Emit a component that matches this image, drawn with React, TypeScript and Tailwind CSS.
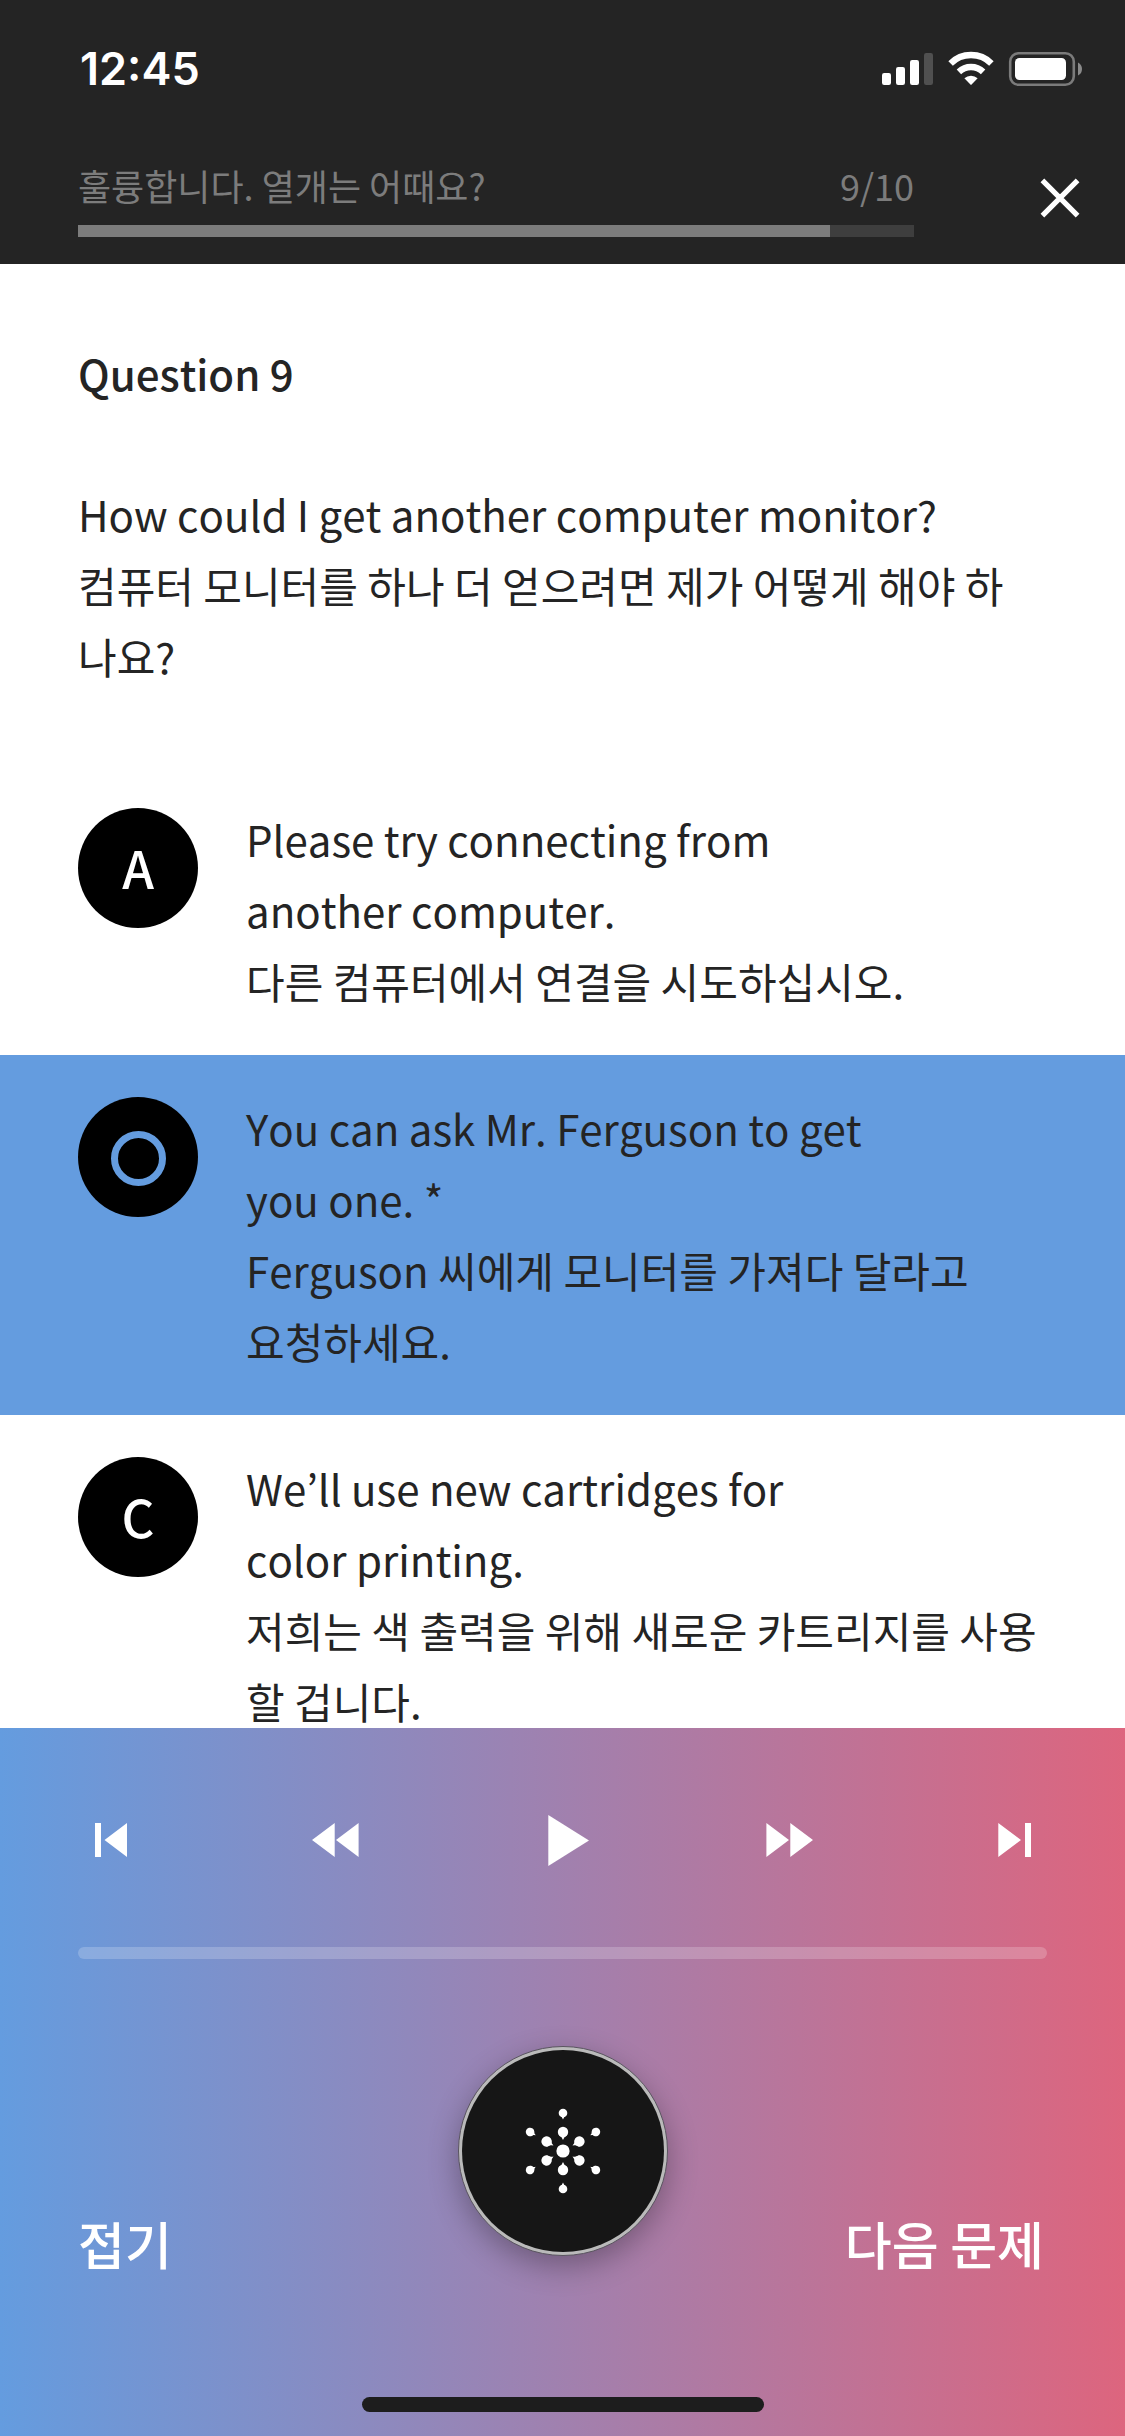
import { ReactNode } from "react"

const options = [
  {
    id: "A",
    correct: false,
    lines: ["Please try connecting from", "another computer.", "다른 컴퓨터에서 연결을 시도하십시오."],
  },
  {
    id: "B",
    correct: true,
    lines: ["You can ask Mr. Ferguson to get", "you one. *", "Ferguson 씨에게 모니터를 가져다 달라고", "요청하세요."],
  },
  {
    id: "C",
    correct: false,
    lines: ["We’ll use new cartridges for", "color printing.", "저희는 색 출력을 위해 새로운 카트리지를 사용", "할 겁니다."],
  },
]

function StatusIcons() {
  return (
    <svg width="201" height="36" viewBox="0 0 201 36">
      {/* Signal */}
      <rect x="0" y="22" width="9" height="12" rx="2.2" fill="#fff" />
      <rect x="14" y="16" width="9" height="18" rx="2.2" fill="#fff" />
      <rect x="28" y="9" width="9" height="25" rx="2.2" fill="#fff" />
      <rect x="42" y="2" width="9" height="32" rx="2.2" fill="#505050" />

      {/* Wifi */}
      <g fill="none" stroke="#fff" strokeWidth="6.4">
        <path d="M68.6 12.4 A29 29 0 0 1 109.4 12.4" />
        <path d="M76.9 20.9 A17.4 17.4 0 0 1 101.1 20.9" />
      </g>
      <path d="M82.4 27.3 A9.6 9.6 0 0 1 95.6 27.3 L89.6 33.5 Q89 34 88.4 33.5 Z" fill="#fff" />

      {/* Battery */}
      <rect x="128.2" y="2.2" width="63.6" height="31.6" rx="8.5" fill="none" stroke="#7b7b7b" strokeWidth="2.6" />
      <rect x="133" y="7" width="51" height="22" rx="4.5" fill="#fff" />
      <path d="M196 11.5 Q200 13.5 200 18 Q200 22.5 196 24.5 Z" fill="#8a8a8a" />
    </svg>
  )
}

function SparkIcon() {
  const angles = [0, 60, 120, 180, 240, 300]
  return (
    <svg width="90" height="90" viewBox="-45 -45 90 90" fill="#fff">
      <circle r="6.6" />
      {angles.map((a) => (
        <g key={a} transform={`rotate(${a})`}>
          <circle cy="-19" r="5.2" />
          <path d="M-4.6 -16.6 Q-1 -14.5 0 -11 Q1 -14.5 4.6 -16.6 Z" />
          <circle cy="-38" r="4.3" />
          <path d="M-3.6 -35.8 Q-0.8 -34.5 0 -31.5 Q0.8 -34.5 3.6 -35.8 Z" />
        </g>
      ))}
    </svg>
  )
}

function ControlButton({ label, className = "", children }: { label: string; className?: string; children: ReactNode }) {
  return (
    <button aria-label={label} className={`flex h-[56px] items-center ${className}`}>
      {children}
    </button>
  )
}

function Badge({ id, correct }: { id: string; correct: boolean }) {
  return (
    <div className="mt-[5px] flex size-[120px] shrink-0 items-center justify-center rounded-full bg-black text-[51px] leading-[74px] font-medium text-white">
      {correct ? <span className="mt-[3px] ml-px size-[55px] rounded-full border-[7px] border-[#649cdf]" /> : <span className="pb-[2px]">{id}</span>}
    </div>
  )
}

export default function App() {
  const current = 9
  const total = 10

  return (
    <div className="flex h-[2436px] w-[1125px] flex-col overflow-hidden bg-white font-['Noto_Sans_CJK_KR',sans-serif] text-[#242424] [font-kerning:none]">
      {/* Header */}
      <header className="h-[264px] shrink-0 bg-[#242424]">
        <div className="flex h-[138px] items-center justify-between pr-[42px] pl-[80px]">
          <span className="font-['Inter',sans-serif] text-[45px] font-semibold text-white [font-kerning:normal]">12:45</span>
          <StatusIcons />
        </div>
        <div className="flex justify-between pr-[45px] pl-[78px]">
          <div className="w-[836px]">
            <div className="flex h-[87px] items-center justify-between pt-[7px] text-[36px] font-normal text-[#7c7c7c]">
              <span>훌륭합니다. 열개는 어때요?</span>
              <span>
                {current}/{total}
              </span>
            </div>
            <div className="h-[12px] bg-[#3e3e3e]">
              <div className="h-full bg-[#7c7c7c]" style={{ width: `${(current / total) * 100}%` }} />
            </div>
          </div>
          <button aria-label="Close" className="mt-[40px] size-[40px]">
            <svg width="40" height="40" viewBox="0 0 40 40" stroke="#fff" strokeWidth="5.2">
              <path d="M2.4 2.4 37.6 37.6 M37.6 2.4 2.4 37.6" />
            </svg>
          </button>
        </div>
      </header>

      {/* Question */}
      <main className="h-[1464px] shrink-0 pt-[73px] text-[42px] leading-[71px]">
        <section className="h-[429px] px-[78px]">
          <h1 className="font-medium">Question 9</h1>
          <div className="mt-[70px] whitespace-nowrap">
            <p>How could I get another computer monitor?</p>
            <p>컴퓨터 모니터를 하나 더 얻으려면 제가 어떻게 해야 하</p>
            <p>나요?</p>
          </div>
        </section>

        {options.map((o) => (
          <section
            key={o.id}
            className={`flex gap-[48px] px-[78px] pt-[37px] pb-[39px] whitespace-nowrap ${o.correct ? "bg-[#649cdf]" : ""}`}
          >
            <Badge id={o.id} correct={o.correct} />
            <div>
              {o.lines.map((line) => (
                <p key={line}>{line}</p>
              ))}
            </div>
          </section>
        ))}
      </main>

      {/* Player */}
      <footer className="flex h-[708px] shrink-0 flex-col bg-linear-to-r/srgb from-[#649cdf] to-[#dd657e] text-white">
        <div className="flex pt-[84px] pl-[95px]">
          <ControlButton label="Previous question">
            <svg width="32" height="34" viewBox="0 0 32 34" fill="#fff">
              <path d="M0 0h6v34H0z M32 0v34L9.5 17z" />
            </svg>
          </ControlButton>
          <ControlButton label="Rewind" className="ml-[185px]">
            <svg width="47" height="34" viewBox="0 0 47 34" fill="#fff">
              <path d="M22.7 0v34L0 17z M46.6 0v34L24 17z" />
            </svg>
          </ControlButton>
          <ControlButton label="Play" className="ml-[189px]">
            <svg width="41" height="51" viewBox="0 0 41 51" fill="#fff">
              <path d="M0.3 0v51L41 25.5z" />
            </svg>
          </ControlButton>
          <ControlButton label="Fast forward" className="ml-[177px]">
            <svg width="47" height="34" viewBox="0 0 47 34" fill="#fff">
              <path d="M0.4 0v34L23 17z M24.3 0v34L47 17z" />
            </svg>
          </ControlButton>
          <ControlButton label="Next question" className="ml-[185px]">
            <svg width="33" height="34" viewBox="0 0 33 34" fill="#fff">
              <path d="M27 0h6v34h-6z M0.3 0v34L23 17z" />
            </svg>
          </ControlButton>
        </div>
        <div className="mx-[78px] mt-[79px] h-[12px] rounded-full bg-white/20" />

        <div className="mt-[87px] flex h-[210px] items-end justify-between px-[78px]">
          <button className="-mb-[25px] w-[200px] text-left text-[51px] leading-[75px] font-medium">접기</button>
          <button
            aria-label="Assistant"
            className="flex size-[210px] items-center justify-center rounded-full border border-[#5a5560] bg-[#bababa] p-[3px] shadow-[0_10px_30px_rgba(0,0,0,0.3)]"
          >
            <span className="flex size-full items-center justify-center rounded-full bg-[#161616]">
              <SparkIcon />
            </span>
          </button>
          <button className="-mb-[25px] flex w-[200px] justify-end pr-[3px] text-[51px] leading-[75px] font-medium whitespace-nowrap">다음 문제</button>
        </div>

        <div className="mx-auto mt-auto mb-[24px] h-[15px] w-[402px] rounded-full bg-[#1d1d1d]" />
      </footer>
    </div>
  )
}
